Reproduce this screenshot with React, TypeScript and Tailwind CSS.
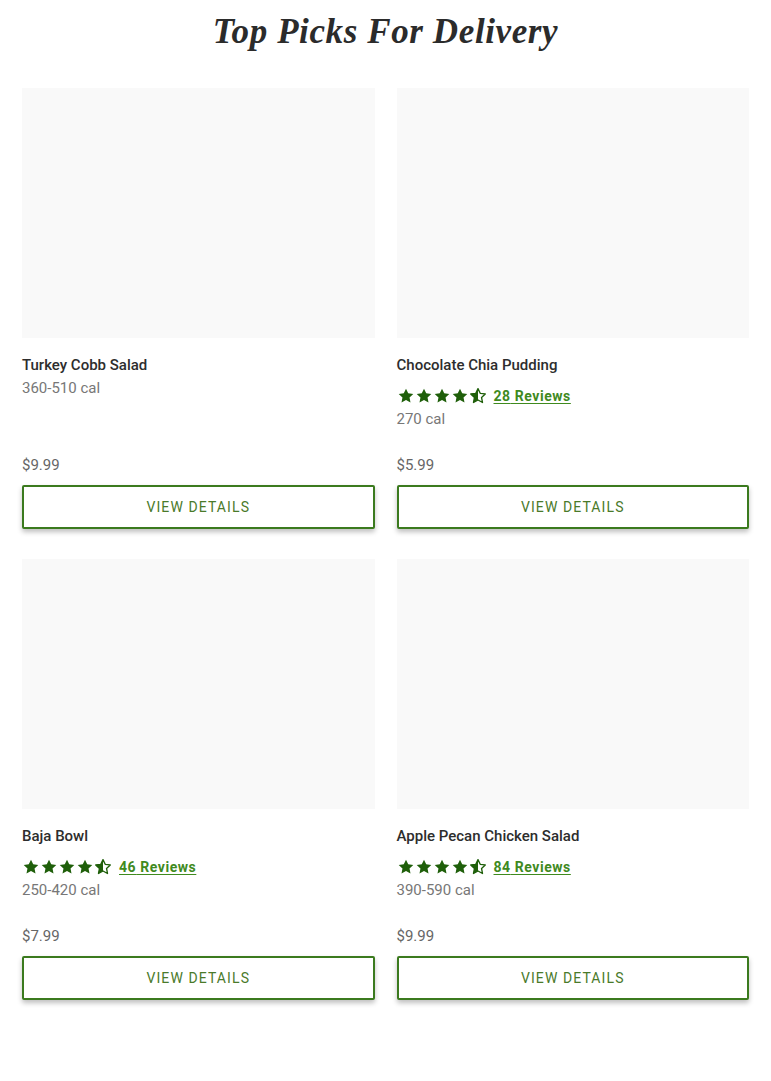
const items = [
  { name: 'Turkey Cobb Salad', cal: '360-510 cal', price: '$9.99' },
  { name: 'Chocolate Chia Pudding', cal: '270 cal', price: '$5.99', reviews: 28 },
  { name: 'Baja Bowl', cal: '250-420 cal', price: '$7.99', reviews: 46 },
  { name: 'Apple Pecan Chicken Salad', cal: '390-590 cal', price: '$9.99', reviews: 84 },
];

const STAR = 'M12 2.2l2.95 6.2 6.75.8-5 4.7 1.3 6.75L12 17.3l-6 3.35 1.3-6.75-5-4.7 6.75-.8z';

function Star({ half }: { half?: boolean }) {
  if (half) {
    return (
      <svg viewBox="0 0 24 24" className="w-[18px] h-[18px]">
        <defs>
          <clipPath id="lefthalf">
            <rect x="0" y="0" width="12" height="24" />
          </clipPath>
        </defs>
        <path d={STAR} fill="none" stroke="#1f5f0a" strokeWidth="1.8" strokeLinejoin="round" />
        <path d={STAR} fill="#1f5f0a" clipPath="url(#lefthalf)" />
      </svg>
    );
  }
  return (
    <svg viewBox="0 0 24 24" className="w-[18px] h-[18px]">
      <path d={STAR} fill="#1f5f0a" />
    </svg>
  );
}

export default function App() {
  return (
    <div className="bg-white min-h-[1081px] px-[22px] pt-[12px] font-['Roboto',sans-serif]">
      <h1 className="text-center text-[35px] leading-[40px] font-bold italic text-[#2b2b2b] font-['Liberation_Serif',serif] tracking-[0.6px]">
        Top Picks For Delivery
      </h1>
      <div className="grid grid-cols-2 gap-x-[22px] gap-y-[30px] mt-[36px]">
        {items.map((item) => (
          <div key={item.name} className="flex flex-col">
            <div className="h-[250px] bg-[#f9f9f9]" />
            <div className="mt-[17px] text-[15px] leading-[20px] font-medium text-[#2d2d2d]">{item.name}</div>
            {item.reviews && (
              <div className="flex items-center mt-[10px] h-[22px]">
                <Star />
                <Star />
                <Star />
                <Star />
                <Star half />
                <a className="ml-[7px] text-[14px] font-bold tracking-[0.55px] text-[#3f8a1e] underline underline-offset-2">
                  {item.reviews} Reviews
                </a>
              </div>
            )}
            <div className={`${item.reviews ? 'mt-[2px]' : 'mt-[3px]'} text-[15px] leading-[20px] text-[#777]`}>{item.cal}</div>
            <div className="mt-auto pt-[26px] text-[15px] leading-[20px] text-[#666]">{item.price}</div>
            <button className="mt-[10px] h-[44px] border-2 border-[#3b7a1e] rounded-[2px] text-[14px] tracking-[1.1px] text-[#4a7a2a] shadow-[0_3px_5px_rgba(0,0,0,0.25)] bg-white">
              VIEW DETAILS
            </button>
          </div>
        ))}
      </div>
    </div>
  );
}
